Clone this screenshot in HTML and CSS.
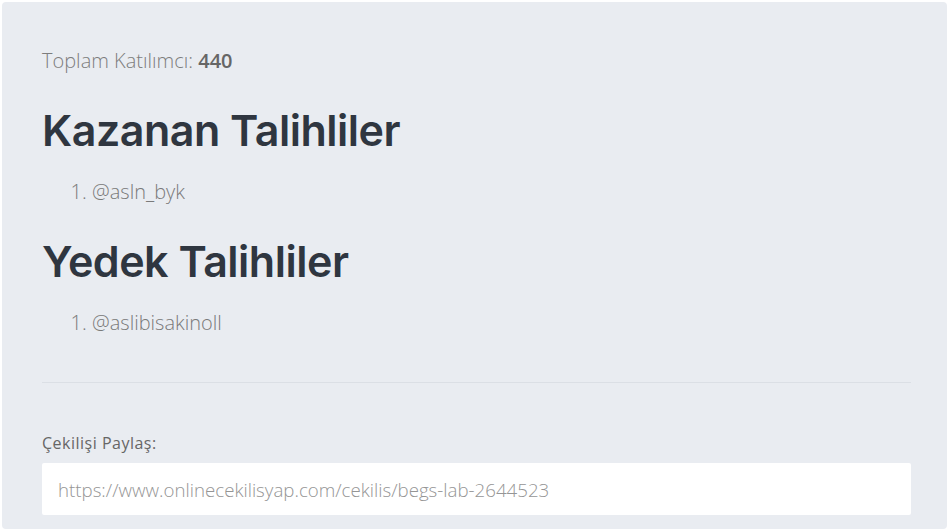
FILE: index.html
```html
<!DOCTYPE html>
<html lang="tr">
<head>
    <meta charset="UTF-8">
    <meta name="viewport" content="width=device-width, initial-scale=1.0">
    <title>Çekiliş Sonuçları</title>
    <link rel="stylesheet" href="styles.css">
</head>
<body>

<div class="result-box">
    <p class="total">Toplam Katılımcı: <strong>440</strong></p>

    <h2 class="title">Kazanan Talihliler</h2>
    <ol class="winners">
        <li>@asln_byk</li>
    </ol>

    <h2 class="title">Yedek Talihliler</h2>
    <ol class="winners">
        <li>@aslibisakinoll</li>
    </ol>

    <hr class="divider">

    <label class="share-label" for="shareLink">Çekilişi Paylaş:</label>
    <input class="share-input" id="shareLink" type="text" value="https://www.onlinecekilisyap.com/cekilis/begs-lab-2644523" readonly>
</div>

</body>
</html>
```

FILE: styles.css
```css
body {
    margin: 0;
    background-color: #ffffff;
    font-family: "Open Sans", Arial, sans-serif;
}

.result-box {
    margin: 2px 3px 0 2px;
    padding: 40px 36px 14px 40px;
    background-color: #e9ecf1;
    border-radius: 4px;
    height: 527px;
    box-sizing: border-box;
}

.total {
    margin: 6px 0 0 0;
    font-size: 20px;
    font-weight: 300;
    color: #7d7d7d;
    line-height: 26px;
}

.total strong {
    font-weight: 600;
    color: #666;
}

.title {
    margin: 28px 0 0 0;
    font-family: Inter, "Open Sans", sans-serif;
    font-size: 43px;
    font-weight: 600;
    letter-spacing: -0.5px;
    color: #2f3640;
    line-height: 56px;
}

.winners {
    margin: 21px 0 0 0;
    padding-left: 50px;
    font-size: 20px;
    font-weight: 300;
    color: #7a7a7a;
    line-height: 26px;
}

.divider {
    margin: 46px 0 0 0;
    border: 0;
    border-top: 1px solid #dbdfe5;
}

.share-label {
    display: block;
    margin-top: 49px;
    font-size: 16px;
    color: #666;
    line-height: 22px;
    letter-spacing: 0.5px;
}

.share-input {
    display: block;
    width: 100%;
    margin-top: 9px;
    height: 52px;
    padding: 0 16px;
    box-sizing: border-box;
    border: 0;
    border-radius: 2px;
    background-color: #ffffff;
    font-family: "Open Sans", Arial, sans-serif;
    font-size: 18.7px;
    font-weight: 300;
    color: #959595;
}
```
